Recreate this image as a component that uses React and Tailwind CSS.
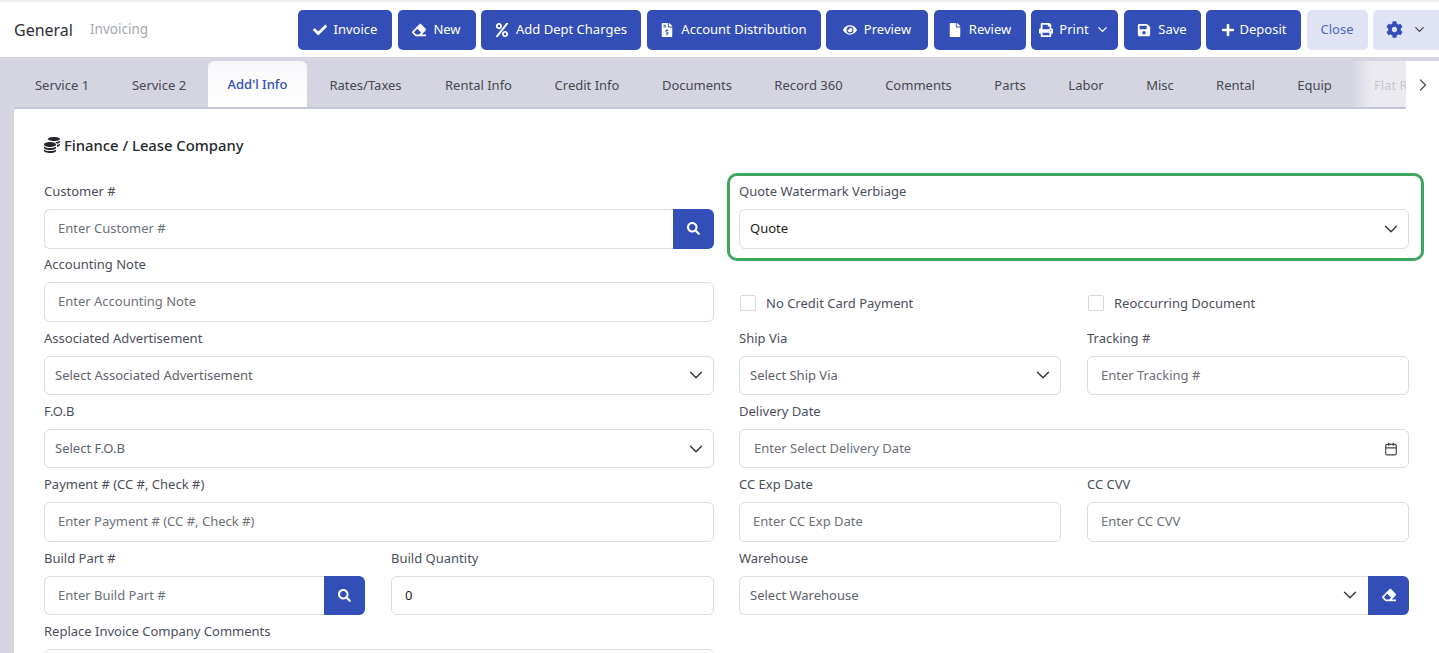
import React from "react";
import { ChevronDown, ChevronRight, Calendar } from "lucide-react";
import { FaCheck, FaEraser, FaPercent, FaFileInvoiceDollar, FaEye, FaFile, FaPrint, FaSave, FaPlus, FaCog, FaSearch, FaCoins } from "react-icons/fa";

const buttons = [
  { label: "Invoice", Icon: FaCheck, w: "w-[94px]", g: "gap-[7px]" },
  { label: "New", Icon: FaEraser, w: "w-[78px]", g: "gap-[7px]" },
  { label: "Add Dept Charges", Icon: FaPercent, w: "w-[160px]", g: "gap-[7px]" },
  { label: "Account Distribution", Icon: FaFileInvoiceDollar, w: "w-[174px]", g: "gap-[7px]" },
  { label: "Preview", Icon: FaEye, w: "w-[102px]", g: "gap-[7px]" },
  { label: "Review", Icon: FaFile, w: "w-[92px]", g: "gap-[7px]" },
  { label: "Print", Icon: FaPrint, w: "w-[87px]", g: "gap-[6px]", caret: true },
  { label: "Save", Icon: FaSave, w: "w-[77px]", g: "gap-[7px]" },
  { label: "Deposit", Icon: FaPlus, w: "w-[95px]", g: "gap-[5px]" },
];

const tabs = [
  ["Service 1", "w-[96px]"],
  ["Service 2", "w-[98px]"],
  ["Add'l Info", "w-[99px]", true],
  ["Rates/Taxes", "w-[117px]"],
  ["Rental Info", "w-[109px]"],
  ["Credit Info", "w-[108px]"],
  ["Documents", "w-[112px]"],
  ["Record 360", "w-[111px]"],
  ["Comments", "w-[109px]"],
  ["Parts", "w-[74px]"],
  ["Labor", "w-[78px]"],
  ["Misc", "w-[70px]"],
  ["Rental", "w-[81px]"],
  ["Equip", "w-[77px]"],
];

function Label({ children }) {
  return <div className="h-[18px] leading-[18px] mb-[9px] text-[13px] text-[#4b4f5c]">{children}</div>;
}

const boxBase = "h-[39.5px] border border-[#dcdce0] bg-white flex items-center text-[13px]";

function TextInput({ placeholder, value }) {
  return (
    <div className={`${boxBase} rounded-[6px] pl-[13px] ${value ? "text-[#222]" : "text-[#6d7078]"}`}>
      {value || placeholder}
    </div>
  );
}

function Select({ placeholder, value }) {
  return (
    <div className={`${boxBase} rounded-[6px] pl-[10px] pr-[6px] justify-between ${value ? "text-[#222]" : "text-[#5f626b]"}`}>
      <span>{value || placeholder}</span>
      <ChevronDown size={22} strokeWidth={1.6} className="text-[#343a40]" />
    </div>
  );
}

function SearchInput({ placeholder }) {
  return (
    <div className="flex">
      <div className={`${boxBase} flex-1 rounded-l-[6px] pl-[13px] border-r-0 text-[#6d7078]`}>{placeholder}</div>
      <div className="w-[41px] h-[39.5px] bg-[#334fb7] rounded-r-[6px] flex items-center justify-center text-white">
        <FaSearch size={13} />
      </div>
    </div>
  );
}

function Field({ label, children }) {
  return (
    <div className="flex flex-col">
      <Label>{label}</Label>
      {children}
    </div>
  );
}

function Check({ label }) {
  return (
    <div className="flex items-center gap-[10px] h-[40px] mt-[28px] ml-px text-[13px] text-[#4b4f5c]">
      <span className="w-[16px] h-[16px] border border-[#d8d8dc] rounded-[2px] bg-white" />
      {label}
    </div>
  );
}

function Row({ left, right }) {
  return (
    <div className="grid grid-cols-2 gap-x-[25px] h-[73.33px]">
      {left}
      {right}
    </div>
  );
}

export default function App() {
  return (
    <div className="h-[653px] overflow-hidden bg-[#d5d5e2]" style={{ fontFamily: '"Noto Sans", sans-serif' }}>
      <header className="h-[57px] bg-white border-t-2 border-[#eeeeee] flex items-center pl-[14px]">
        <div className="text-[16px] text-[#2c2f36]">General</div>
        <div className="text-[13.5px] text-[#a5a8ae] ml-[17px]">Invoicing</div>
        <div className="ml-auto flex items-center gap-[5.5px]">
          {buttons.map(({ label, Icon, w, g, caret }) => (
            <button key={label} className={`${w} ${g} h-[40px] rounded-[5px] bg-[#334fb7] text-white text-[13px] flex items-center justify-center`}>
              <Icon size={14} />
              <span>{label}</span>
              {caret && <ChevronDown size={15} />}
            </button>
          ))}
          <button className="w-[61px] h-[40px] rounded-[5px] bg-[#dfe3f3] text-[#5068bd] text-[13px]">Close</button>
          <button className="w-[66px] h-[40px] rounded-l-[5px] bg-[#dfe3f3] text-[#334fb7] flex items-center justify-center gap-[9px]">
            <FaCog size={17} />
            <ChevronDown size={15} className="text-[#444]" />
          </button>
        </div>
      </header>

      <div className="h-[596px] pt-[4px] pl-[14px] flex flex-col bg-[#d5d5e2]">
        <div className="relative flex bg-white">
          <nav className="w-[1392px] h-[48px] flex overflow-hidden bg-[#d5d5e2] border-b-2 border-[#c3c6d6] relative">
            {tabs.map(([label, w, active]) => (
              <div
                key={label}
                className={`${w} shrink-0 flex items-center justify-center text-[13px] ${active ? "h-[48px] bg-gradient-to-b from-[#f8f8fb] to-white rounded-t-[6px] text-[#334fb7] font-medium" : "h-[46px] pt-[4px] text-[#45484f]"}`}
              >
                {label}
              </div>
            ))}
            <div className="shrink-0 pl-[21px] w-[60px] h-[46px] pt-[4px] flex items-center text-[13px] text-[#45484f] whitespace-nowrap overflow-hidden">Flat Rate</div>
            <div className="absolute right-0 top-0 h-[48px] w-[56px] bg-gradient-to-r from-transparent to-[#f1f1f5]/75 to-40%" />
          </nav>
          <div className="flex-1 flex items-center justify-center text-[#555]">
            <ChevronRight size={20} strokeWidth={1.6} />
          </div>
        </div>

        <main className="flex-1 bg-white pl-[30px] pr-[30px]">
          <h2 className="h-[36px] mt-[18px] mb-[19px] flex items-center gap-[4px] text-[14.8px] font-medium text-[#25272c]">
            <FaCoins size={16} />
            Finance / Lease Company
          </h2>

          <Row
            left={<Field label="Customer #"><SearchInput placeholder="Enter Customer #" /></Field>}
            right={
              <div className="relative">
                <Field label="Quote Watermark Verbiage"><Select value="Quote" /></Field>
                <div className="absolute -left-[12px] -right-[15px] -top-[9px] h-[88px] border-[3px] border-[#3da75f] rounded-[10px] pointer-events-none" />
              </div>
            }
          />
          <Row
            left={<Field label="Accounting Note"><TextInput placeholder="Enter Accounting Note" /></Field>}
            right={
              <div className="grid grid-cols-2 gap-x-[26px]">
                <Check label="No Credit Card Payment" />
                <Check label="Reoccurring Document" />
              </div>
            }
          />
          <Row
            left={<Field label="Associated Advertisement"><Select placeholder="Select Associated Advertisement" /></Field>}
            right={
              <div className="grid grid-cols-2 gap-x-[26px]">
                <Field label="Ship Via"><Select placeholder="Select Ship Via" /></Field>
                <Field label="Tracking #"><TextInput placeholder="Enter Tracking #" /></Field>
              </div>
            }
          />
          <Row
            left={<Field label="F.O.B"><Select placeholder="Select F.O.B" /></Field>}
            right={
              <Field label="Delivery Date">
                <div className={`${boxBase} rounded-[6px] pl-[14px] pr-[10px] justify-between text-[#6d7078]`}>
                  <span>Enter Select Delivery Date</span>
                  <Calendar size={14} className="text-[#444]" />
                </div>
              </Field>
            }
          />
          <Row
            left={<Field label="Payment # (CC #, Check #)"><TextInput placeholder="Enter Payment # (CC #, Check #)" /></Field>}
            right={
              <div className="grid grid-cols-2 gap-x-[26px]">
                <Field label="CC Exp Date"><TextInput placeholder="Enter CC Exp Date" /></Field>
                <Field label="CC CVV"><TextInput placeholder="Enter CC CVV" /></Field>
              </div>
            }
          />
          <Row
            left={
              <div className="grid grid-cols-[321px_1fr] gap-x-[26px]">
                <Field label="Build Part #"><SearchInput placeholder="Enter Build Part #" /></Field>
                <Field label="Build Quantity"><TextInput value="0" /></Field>
              </div>
            }
            right={
              <Field label="Warehouse">
                <div className="flex">
                  <div className={`${boxBase} flex-1 rounded-l-[6px] border-r-0 pl-[10px] pr-[7px] justify-between text-[#5f626b]`}>
                    <span>Select Warehouse</span>
                    <ChevronDown size={22} strokeWidth={1.6} className="text-[#343a40]" />
                  </div>
                  <div className="w-[41px] h-[39.5px] bg-[#334fb7] rounded-r-[6px] flex items-center justify-center text-white">
                    <FaEraser size={14} />
                  </div>
                </div>
              </Field>
            }
          />
          <Row
            left={<Field label="Replace Invoice Company Comments"><TextInput placeholder="" /></Field>}
            right={<div />}
          />
        </main>
      </div>
    </div>
  );
}
